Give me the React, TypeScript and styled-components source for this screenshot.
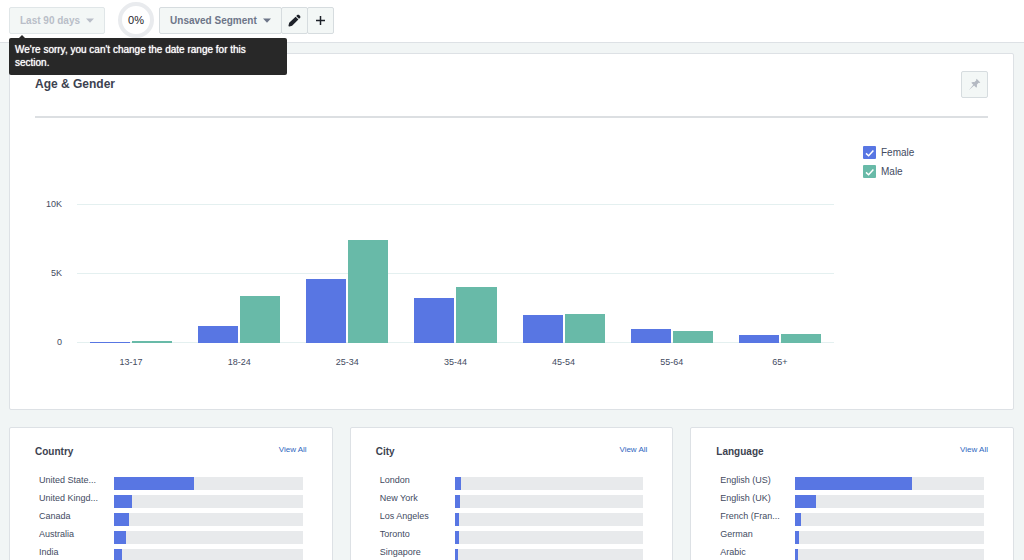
import React from "react";
import styled, { createGlobalStyle } from "styled-components";

const color = {
  page: "#f1f5f5",
  border: "#dde1e5",
  ink: "#3c4250",
  text: "#434b5f",
  muted: "#6d7588",
  female: "#5876e3",
  male: "#68baa8",
  track: "#e8eaec",
  grid: "#e4f0f0",
  link: "#2f67c0",
};

const GlobalStyle = createGlobalStyle`
  *, *::before, *::after { box-sizing: border-box; }
  body {
    margin: 0;
    background: ${color.page};
    font-family: "Liberation Sans", Arial, sans-serif;
    color: ${color.text};
  }
  button, input { font: inherit; margin: 0; }
`;

const Page = styled.div`
  height: 100vh;
  overflow: hidden;
`;

const Toolbar = styled.header`
  display: flex;
  align-items: center;
  height: 43px;
  padding: 0 9px 2px;
  background: #fff;
  border-bottom: 1px solid ${color.border};
`;

const DateRange = styled.div`
  position: relative;
  display: flex;
`;

const ToolButton = styled.button`
  display: flex;
  align-items: center;
  justify-content: center;
  gap: 6px;
  height: 27px;
  min-width: 27px;
  padding: 0 10px;
  border: 1px solid #d6dcdf;
  border-radius: 2px;
  background: #f3f7f6;
  color: ${color.muted};
  font-size: 10px;
  font-weight: 700;
  line-height: 13px;
  white-space: nowrap;

  &:disabled {
    border-color: #e0e6e8;
    color: #b9bec8;
  }
`;

const IconButton = styled(ToolButton)`
  padding: 0;
  color: #1d2129;
`;

const Segment = styled.div`
  display: flex;

  & > button + button {
    margin-left: -1px;
  }
`;

const Progress = styled.div`
  display: grid;
  place-items: center;
  width: 36px;
  height: 36px;
  margin: 0 5px 0 13px;
  border: 4px solid #e9ebee;
  border-radius: 50%;
  color: #1d2129;
  font-size: 11px;
`;

const Tooltip = styled.div`
  position: absolute;
  z-index: 2;
  top: 31px;
  left: 0;
  width: 278px;
  padding: 5px 6px 6px;
  border-radius: 2px;
  background: #282828;
  color: #fff;
  font-size: 10px;
  line-height: 13px;
  text-shadow: 0 0 1px #fff;

  &::before {
    content: "";
    position: absolute;
    top: -3px;
    left: 10px;
    border: 3px solid transparent;
    border-top: 0;
    border-bottom-color: #282828;
  }
`;

const Main = styled.main`
  display: grid;
  gap: 17px;
  padding: 10px 10px 17px 9px;
`;

const Card = styled.section`
  min-width: 0;
  padding: 17px 25px;
  border: 1px solid ${color.border};
  border-radius: 2px;
  background: #fff;
`;

const ChartHead = styled.div`
  display: flex;
  align-items: flex-start;
  justify-content: space-between;
  padding-bottom: 18px;
  border-bottom: 2px solid #dcdfe2;
`;

const ChartTitle = styled.h2`
  margin: 5px 0 0;
  color: ${color.ink};
  font-size: 12px;
  line-height: 16px;
`;

const ChartBody = styled.div`
  display: flex;
  padding: 28px 0 23px;
`;

const Axis = styled.div`
  display: flex;
  flex-direction: column;
  justify-content: space-between;
  width: 27px;
  height: 151px;
  margin: 52px 15px 0 0;
  font-size: 9px;
  line-height: 13px;
  text-align: right;
`;

const Plot = styled.div`
  display: grid;
  flex: 1;
  grid-template-rows: 139px 13px;
  row-gap: 13px;
  padding-top: 58px;
`;

const GridLines = styled.div`
  display: flex;
  grid-area: 1 / 1;
  flex-direction: column;
  justify-content: space-between;
`;

const GridLine = styled.div`
  height: 1px;
  background: ${color.grid};
`;

const Groups = styled.div`
  display: grid;
  grid-area: 1 / 1;
  grid-template-columns: repeat(7, 1fr);
`;

const Group = styled.div`
  display: grid;
  grid-template-columns: 1fr 1fr;
  align-items: end;
  column-gap: 2px;
  padding: 0 13px;
`;

const Bar = styled.div<{ $fill: string }>`
  background: ${(p) => p.$fill};
`;

const GroupLabels = styled.div`
  display: grid;
  grid-template-columns: repeat(7, 1fr);
  font-size: 9px;
  line-height: 13px;
  text-align: center;
`;

const Legend = styled.div`
  display: flex;
  flex-direction: column;
  gap: 6px;
  width: 125px;
  margin-left: 29px;
`;

const LegendItem = styled.label`
  display: flex;
  gap: 5px;
  font-size: 10px;
  line-height: 13px;
`;

const Tick = styled.span<{ $fill: string }>`
  display: grid;
  width: 13px;
  height: 13px;

  & > * {
    grid-area: 1 / 1;
  }

  & > input {
    width: 13px;
    height: 13px;
    border-radius: 1px;
    background: ${(p) => p.$fill};
    appearance: none;
  }

  & > svg {
    pointer-events: none;
    visibility: hidden;
  }

  & > input:checked + svg {
    visibility: visible;
  }
`;

const Columns = styled.div`
  display: grid;
  grid-template-columns: repeat(3, 1fr);
  gap: 17px;
`;

const ListHead = styled.div`
  display: flex;
  align-items: flex-start;
  justify-content: space-between;
  margin-bottom: 16px;
`;

const ListTitle = styled.h3`
  margin: 0;
  color: ${color.ink};
  font-size: 10px;
  line-height: 13px;
`;

const ViewAll = styled.a`
  color: ${color.link};
  font-size: 8px;
  line-height: 10px;
  text-decoration: none;
`;

const Rows = styled.ul`
  display: grid;
  gap: 2px;
  margin: 0;
  padding: 0 4px;
  list-style: none;
`;

const Row = styled.li`
  display: flex;
  height: 16px;
`;

const RowLabel = styled.span`
  width: 75px;
  font-size: 9px;
  line-height: 13px;
  white-space: nowrap;
`;

const Track = styled.div`
  flex: 1;
  align-self: flex-end;
  height: 13px;
  background: ${color.track};
`;

const TrackFill = styled.div`
  height: 100%;
  background: ${color.female};
`;

const Caret = () => (
  <svg width="8" height="5" viewBox="0 0 8 5" aria-hidden="true">
    <path d="M0 .4h8L4 4.8z" fill="currentColor" />
  </svg>
);

const PencilIcon = () => (
  <svg width="13" height="13" viewBox="0 0 13 13" aria-hidden="true">
    <path
      d="M.5 11.6 1.2 8.8 7.6 2.7 10.4 5.4 4.1 11.7 1.4 12.5C.8 12.6.4 12.2.5 11.6zM8.2 2.1 9.2 1.1C9.8.5 10.6.5 11.2 1.1L12 1.9C12.6 2.5 12.6 3.3 12 3.9L11 4.8z"
      fill="currentColor"
    />
  </svg>
);

const PlusIcon = () => (
  <svg width="11" height="11" viewBox="0 0 11 11" aria-hidden="true">
    <path d="M5.5 1v9M1 5.5h9" stroke="currentColor" strokeWidth="1.5" />
  </svg>
);

const PinIcon = () => (
  <svg width="13" height="13" viewBox="0 0 13 13" aria-hidden="true">
    <path
      d="M8.6.7 12.3 4.4 11.2 4.9 10.6 4.8 8.8 6.8C9.2 8 9 9 8.3 9.7L6.1 7.6 .8 12.3 5.3 6.8 3.3 4.7C4.1 4 5.1 3.8 6.2 4.2L8.2 2.4 8.1 1.8z"
      fill="#b4b9c2"
    />
  </svg>
);

const ages = [
  { label: "13-17", female: 80, male: 180 },
  { label: "18-24", female: 1250, male: 3380 },
  { label: "25-34", female: 4600, male: 7420 },
  { label: "35-44", female: 3220, male: 4060 },
  { label: "45-54", female: 1990, male: 2120 },
  { label: "55-64", female: 1020, male: 860 },
  { label: "65+", female: 560, male: 630 },
];

const AXIS_MAX = 10000;

const lists: { title: string; rows: [string, number][] }[] = [
  {
    title: "Country",
    rows: [
      ["United State...", 42.3],
      ["United Kingd...", 9.4],
      ["Canada", 8.2],
      ["Australia", 6.3],
      ["India", 4.4],
    ],
  },
  {
    title: "City",
    rows: [
      ["London", 3.6],
      ["New York", 2.8],
      ["Los Angeles", 2.3],
      ["Toronto", 2.1],
      ["Singapore", 1.6],
    ],
  },
  {
    title: "Language",
    rows: [
      ["English (US)", 61.6],
      ["English (UK)", 11],
      ["French (Fran...", 3.2],
      ["German", 2.1],
      ["Arabic", 1.6],
    ],
  },
];

const percentOfAxis = (n: number) => `${(n / AXIS_MAX) * 100}%`;

export default function App() {
  return (
    <Page>
      <GlobalStyle />
      <Toolbar>
        <DateRange>
          <ToolButton disabled aria-describedby="range-tip">
            Last 90 days <Caret />
          </ToolButton>
          <Tooltip id="range-tip" role="tooltip">
            We're sorry, you can't change the date range for this section.
          </Tooltip>
        </DateRange>
        <Progress>0%</Progress>
        <Segment>
          <ToolButton>
            Unsaved Segment <Caret />
          </ToolButton>
          <IconButton aria-label="Edit segment">
            <PencilIcon />
          </IconButton>
          <IconButton aria-label="Add segment">
            <PlusIcon />
          </IconButton>
        </Segment>
      </Toolbar>

      <Main>
        <Card>
          <ChartHead>
            <ChartTitle>Age &amp; Gender</ChartTitle>
            <IconButton aria-label="Pin chart">
              <PinIcon />
            </IconButton>
          </ChartHead>
          <ChartBody>
            <Axis>
              <span>10K</span>
              <span>5K</span>
              <span>0</span>
            </Axis>
            <Plot>
              <GridLines>
                <GridLine />
                <GridLine />
                <GridLine />
              </GridLines>
              <Groups>
                {ages.map((a) => (
                  <Group key={a.label}>
                    <Bar $fill={color.female} style={{ height: percentOfAxis(a.female) }} />
                    <Bar $fill={color.male} style={{ height: percentOfAxis(a.male) }} />
                  </Group>
                ))}
              </Groups>
              <GroupLabels>
                {ages.map((a) => (
                  <span key={a.label}>{a.label}</span>
                ))}
              </GroupLabels>
            </Plot>
            <Legend>
              {[
                { name: "Female", fill: color.female },
                { name: "Male", fill: color.male },
              ].map((s) => (
                <LegendItem key={s.name}>
                  <Tick $fill={s.fill}>
                    <input type="checkbox" defaultChecked />
                    <svg width="13" height="13" viewBox="0 0 13 13" aria-hidden="true">
                      <path d="M3 7.4 5.6 9.8 10.4 4.6" fill="none" stroke="#fff" strokeWidth="1.5" />
                    </svg>
                  </Tick>
                  {s.name}
                </LegendItem>
              ))}
            </Legend>
          </ChartBody>
        </Card>

        <Columns>
          {lists.map((list) => (
            <Card key={list.title}>
              <ListHead>
                <ListTitle>{list.title}</ListTitle>
                <ViewAll href="#">View All</ViewAll>
              </ListHead>
              <Rows>
                {list.rows.map(([label, value]) => (
                  <Row key={label}>
                    <RowLabel>{label}</RowLabel>
                    <Track>
                      <TrackFill style={{ width: `${value}%` }} />
                    </Track>
                  </Row>
                ))}
              </Rows>
            </Card>
          ))}
        </Columns>
      </Main>
    </Page>
  );
}
